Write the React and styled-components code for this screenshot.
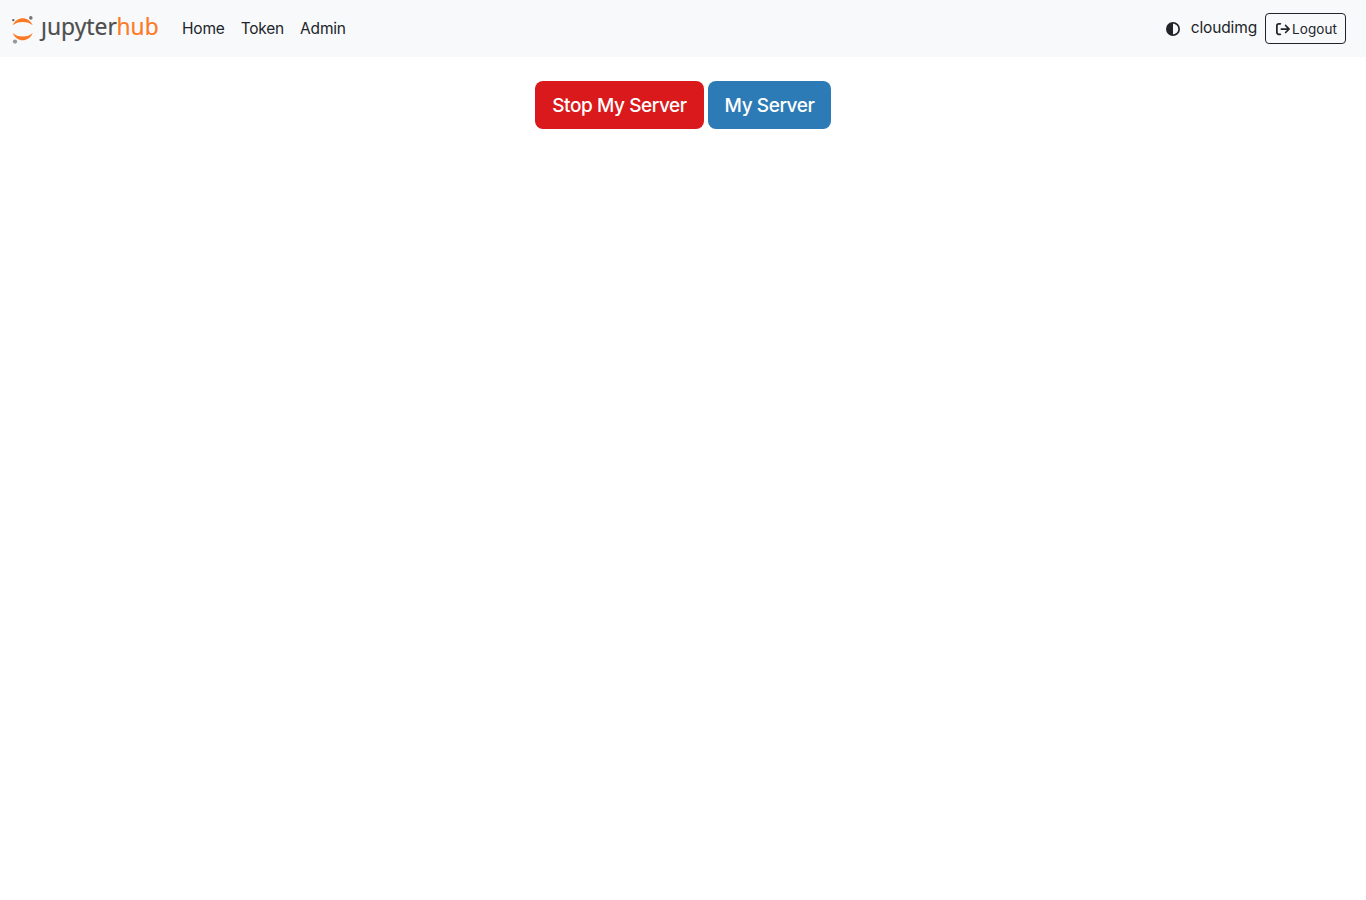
import React from "react";
import styled, { createGlobalStyle } from "styled-components";
import { FaCircleHalfStroke, FaArrowRightFromBracket } from "react-icons/fa6";

const navLinks = ["Home", "Token", "Admin"];

const Logo = () => (
  <LogoSvg width="146" height="28" viewBox="0 0 146 28" role="img" aria-label="jupyterhub">
    <path d="M0.6 9.3C2.8 4.6 6.6 2.2 10.7 2.2S18.6 4.6 20.8 9.3C18.2 7 14.6 5.9 10.7 5.9S3.2 7 0.6 9.3Z" fill="#fc7a26" />
    <path d="M0.6 17C2.8 21.8 6.6 24.3 10.7 24.3S18.6 21.8 20.8 17C18.2 19.4 14.6 20.5 10.7 20.5S3.2 19.4 0.6 17Z" fill="#fc7a26" />
    <circle cx="18.8" cy="1.9" r="1.8" fill="#767677" />
    <circle cx="1.3" cy="4.1" r="1.2" fill="#616262" />
    <circle cx="3" cy="25.6" r="2.1" fill="#989798" />
    <text x="29" y="19.2" fill="#4e4e4e" stroke="#4e4e4e" textLength="76" lengthAdjust="spacingAndGlyphs">ȷupyter</text>
    <text x="104.6" y="19.2" fill="#fc7a26" stroke="#fc7a26" textLength="42" lengthAdjust="spacingAndGlyphs">hub</text>
  </LogoSvg>
);

const App = () => {
  return (
    <>
      <GlobalStyle />
      <Navbar>
        <Brand href="#">
          <Logo />
        </Brand>
        <NavLinks>
          {navLinks.map((link) => (
            <NavLink key={link} href="#">
              {link}
            </NavLink>
          ))}
        </NavLinks>
        <UserArea>
          <ThemeToggle aria-label="Toggle theme">
            <FaCircleHalfStroke size={14} />
          </ThemeToggle>
          <UserName>cloudimg</UserName>
          <LogoutButton>
            <FaArrowRightFromBracket size={14} />
            <span>Logout</span>
          </LogoutButton>
        </UserArea>
      </Navbar>
      <Main>
        <ServerButton $width="169px" $color="#d9191c">
          Stop My Server
        </ServerButton>
        <ServerButton $width="123px" $color="#2c7bb6">
          My Server
        </ServerButton>
      </Main>
    </>
  );
};

const GlobalStyle = createGlobalStyle`
  * {
    box-sizing: border-box;
  }
  body {
    margin: 0;
    background: #fff;
    color: #212529;
    font-family: Inter, sans-serif;
    font-size: 16px;
    line-height: 24px;
  }
  button {
    font-family: inherit;
    cursor: pointer;
  }
`;

const Navbar = styled.nav`
  display: flex;
  align-items: center;
  height: 57px;
  padding: 0 20px 0 12px;
  background: #f8f9fb;
`;

const Brand = styled.a`
  display: flex;
  padding-top: 3px;
`;

const LogoSvg = styled.svg`
  display: block;
  overflow: visible;
  text {
    font-family: "Noto Sans", sans-serif;
    font-size: 23.2px;
    stroke-width: 0.2px;
  }
`;

const NavLinks = styled.div`
  display: flex;
  gap: 16px;
  margin-left: 24px;
`;

const NavLink = styled.a`
  color: #212529;
  font-size: 15.5px;
  letter-spacing: -0.2px;
  text-decoration: none;
`;

const UserArea = styled.div`
  display: flex;
  align-items: center;
  margin-left: auto;
`;

const ThemeToggle = styled.button`
  display: flex;
  margin-right: 11px;
  padding: 0;
  border: 0;
  background: none;
  color: #212529;
`;

const UserName = styled.span`
  margin: 0 8px 2px 0;
  font-size: 15.5px;
  letter-spacing: -0.15px;
`;

const LogoutButton = styled.button`
  display: flex;
  align-items: center;
  gap: 2px;
  width: 81px;
  height: 31px;
  padding: 1px 0 0 10px;
  border: 1px solid #212529;
  border-radius: 4px;
  background: none;
  color: #212529;
  font-size: 13.5px;
  letter-spacing: 0.1px;
`;

const Main = styled.main`
  display: flex;
  justify-content: center;
  gap: 4px;
  padding-top: 24px;
`;

const ServerButton = styled.button`
  width: ${({ $width }) => $width};
  height: 48px;
  padding: 0;
  border: 0;
  border-radius: 8px;
  background: ${({ $color }) => $color};
  color: #fff;
  font-size: 19px;
  font-weight: 500;
  letter-spacing: -0.42px;
`;

export default App;
